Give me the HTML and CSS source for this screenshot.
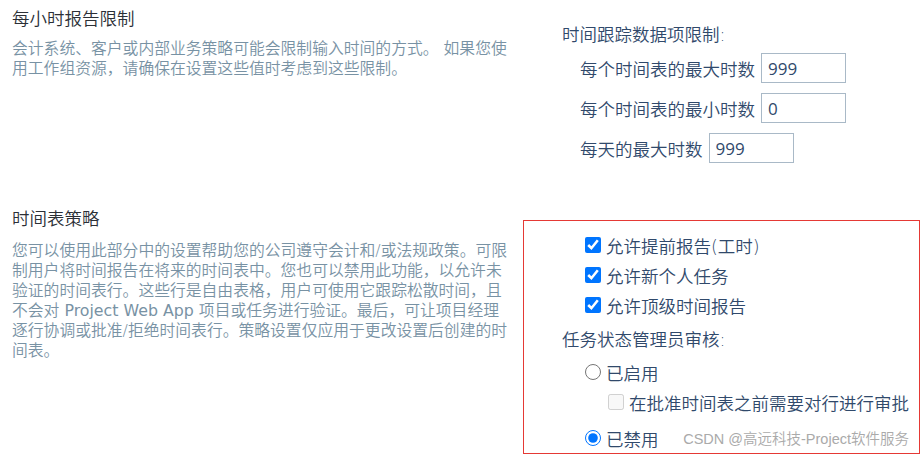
FILE: index.html
```html
<!DOCTYPE html>
<html lang="zh-CN">
<head>
    <meta charset="UTF-8">
    <title>时间表设置</title>
    <link rel="stylesheet" href="styles.css">
</head>
<body>
    <div class="section section-hours">
        <div class="section-info">
            <h2 class="section-title">每小时报告限制</h2>
            <p class="section-desc">会计系统、客户或内部业务策略可能会限制输入时间的方式。 如果您使用工作组资源，请确保在设置这些值时考虑到这些限制。</p>
        </div>
        <div class="section-fields">
            <div class="group-label">时间跟踪数据项限制:</div>
            <div class="field-list">
                <label class="field-row">每个时间表的最大时数 <input class="num-input" type="text" value="999"></label>
                <label class="field-row">每个时间表的最小时数 <input class="num-input" type="text" value="0"></label>
                <label class="field-row">每天的最大时数 <input class="num-input" type="text" value="999"></label>
            </div>
        </div>
    </div>

    <div class="section section-policy">
        <div class="section-info">
            <h2 class="section-title">时间表策略</h2>
            <p class="section-desc">您可以使用此部分中的设置帮助您的公司遵守会计和/或法规政策。可限制用户将时间报告在将来的时间表中。您也可以禁用此功能，以允许未验证的时间表行。这些行是自由表格，用户可使用它跟踪松散时间，且不会对 <span class="product">Project Web App</span> 项目或任务进行验证。最后，可让项目经理逐行协调或批准/拒绝时间表行。策略设置仅应用于更改设置后创建的时间表。</p>
        </div>
        <div class="policy-box">
            <label class="option"><input type="checkbox" checked> 允许提前报告(工时)</label>
            <label class="option"><input type="checkbox" checked> 允许新个人任务</label>
            <label class="option"><input type="checkbox" checked> 允许顶级时间报告</label>

            <div class="group-label review-label">任务状态管理员审核:</div>
            <label class="option option-first"><input type="radio" name="review"> 已启用</label>
            <label class="option option-sub"><input type="checkbox" disabled> 在批准时间表之前需要对行进行审批</label>
            <label class="option option-last"><input type="radio" name="review" checked> 已禁用</label>

            <div class="watermark">CSDN @高远科技-Project软件服务</div>
        </div>
    </div>
</body>
</html>
```

FILE: styles.css
```css
* {
    margin: 0;
    padding: 0;
    box-sizing: border-box;
}

body {
    background: #fff;
    font-family: "DejaVu Sans", "Noto Sans CJK SC", sans-serif;
    font-weight: 350;
    color: #30496b;
}

.section {
    display: grid;
    grid-template-columns: 523px 397px;
    align-items: start;
}

.section-hours {
    padding-top: 8px;
}

.section-policy {
    margin-top: 45px;
}

.section-info {
    padding-left: 12px;
}

.section-title {
    font-size: 17.5px;
    font-weight: 350;
    line-height: 22px;
    color: #2b2f36;
    margin-bottom: 9px;
}

.section-policy .section-title {
    margin-bottom: 11px;
}

.section-desc {
    width: 500px;
    font-size: 15.8px;
    line-height: 20px;
    color: #7892a4;
}

.product {
    font-weight: 400;
}

/* right column */
.section-fields {
    padding-top: 16px;
    padding-left: 39px;
}

.group-label {
    font-size: 17.5px;
    line-height: 22px;
    color: #30496b;
}

.field-list {
    display: flex;
    flex-direction: column;
    gap: 10px;
    margin-top: 7px;
    padding-left: 18px;
}

.field-row {
    display: flex;
    align-items: center;
    gap: 6px;
    height: 30px;
    font-size: 17.5px;
}

.num-input {
    width: 85px;
    height: 30px;
    border: 1px solid #a9b9c7;
    padding: 0 6px;
    font-family: "Open Sans", sans-serif;
    font-size: 17px;
    color: #30496b;
    outline: none;
}

.policy-box {
    position: relative;
    margin-top: 12px;
    border: 1px solid #e53935;
    padding: 9px 0 0 38px;
}

.option {
    display: flex;
    align-items: center;
    gap: 5px;
    height: 30px;
    padding-left: 23px;
    font-size: 17.5px;
    color: #30496b;
}

.option input {
    width: 16px;
    height: 16px;
    margin: 0;
}

.review-label {
    height: 30px;
    line-height: 30px;
    margin-top: 5px;
}

.option-first {
    margin-top: 2px;
}

.option-sub {
    padding-left: 46px;
}

.option-last {
    margin-top: 6px;
}

.watermark {
    position: absolute;
    right: 10px;
    bottom: 4px;
    font-family: "Liberation Sans", "Noto Sans CJK SC", sans-serif;
    font-size: 14.5px;
    line-height: 20px;
    color: #aaa;
}
```
